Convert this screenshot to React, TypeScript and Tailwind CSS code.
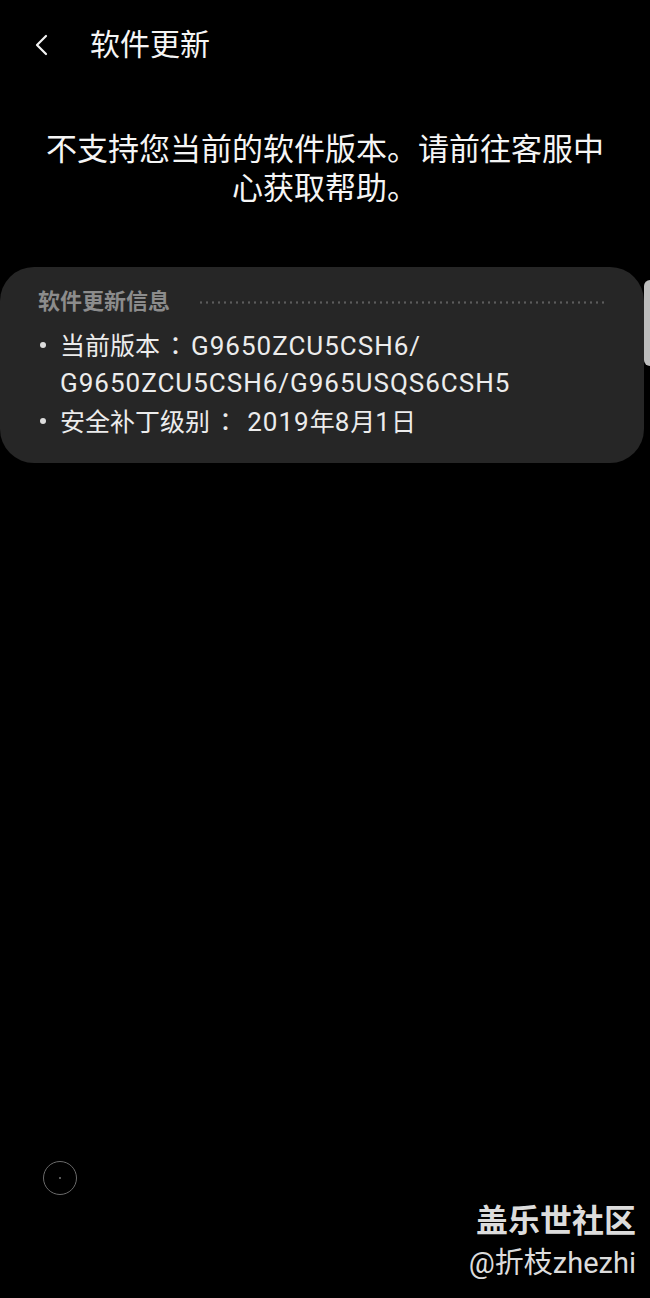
import React from 'react';

const font = { fontFamily: 'Roboto, "Noto Sans CJK SC", sans-serif' };

// Latin runs in the Samsung font are wider than Roboto; widen them a little
const L = ({ children }: { children: React.ReactNode }) => (
  <span className="text-[26px] tracking-[1px]">{children}</span>
);

const Colon = () => <span className="px-[3px] font-['Noto_Sans_CJK_TC']">：</span>;

const InfoLine = ({ children }: { children: React.ReactNode }) => (
  <div className="flex">
    <div className="flex h-[37px] w-[22px] shrink-0 items-center pl-[2px]">
      <div className="h-[6px] w-[6px] rounded-full bg-[#dcdcdc]" />
    </div>
    <div>{children}</div>
  </div>
);

const App = () => {
  return (
    <div className="relative flex h-[1298px] w-[650px] flex-col overflow-hidden bg-black text-white" style={font}>
      <div className="flex h-[90px] items-center">
        <svg className="ml-[34px] h-[24px] w-[16px]" viewBox="0 0 16 24" fill="none">
          <path d="M12 3 L3 12 L12 21" stroke="#f2f2f2" strokeWidth="2.2" strokeLinecap="round" strokeLinejoin="round" />
        </svg>
        <h1 className="ml-[40px] text-[30px] leading-none text-[#f5f5f5]">软件更新</h1>
      </div>

      <p className="mt-[40px] px-[40px] text-center text-[31px] leading-[39px] text-[#f5f5f5]">
        不支持您当前的软件版本。请前往客服中心获取帮助。
      </p>

      <div className="mr-[6px] mt-[59px] rounded-[34px] bg-[#262626] pb-[22px] pl-[38px] pr-[36px] pt-[20px]">
        <div className="flex items-center gap-[28px]">
          <span className="text-[22px] font-bold leading-[30px] text-[#8c8c8c]">软件更新信息</span>
          <div className="h-[3px] flex-1 bg-[radial-gradient(circle,#5c5c5c_1px,transparent_1.3px)] bg-[length:6px_3px]" />
        </div>
        <div className="mt-[9px] text-[25px] leading-[37px] text-[#ececec]">
          <InfoLine>
            当前版本<Colon />
            <L>G9650ZCU5CSH6/</L>
            <br />
            <L>G9650ZCU5CSH6/G965USQS6CSH5</L>
          </InfoLine>
          <InfoLine>
            安全补丁级别<Colon /> <L>2019</L>年<L>8</L>月<L>1</L>日
          </InfoLine>
        </div>
      </div>

      <div className="absolute right-0 top-[280px] h-[86px] w-[6px] rounded-l-full bg-[#bdbdbd]" />

      <div className="absolute left-[43px] top-[1161px] flex h-[34px] w-[34px] items-center justify-center rounded-full border border-[#6a6a6a]">
        <div className="h-[2px] w-[2px] rounded-full bg-[#777]" />
      </div>

      <div className="flex-1" />

      <div className="flex flex-col items-end pb-[15px] pr-[14px] text-[#dcdcdc]">
        <span className="text-[32px] font-bold leading-[44px]">盖乐世社区</span>
        <span className="text-[29px] leading-[40px]">@折枝zhezhi</span>
      </div>
    </div>
  );
};

export default App;
